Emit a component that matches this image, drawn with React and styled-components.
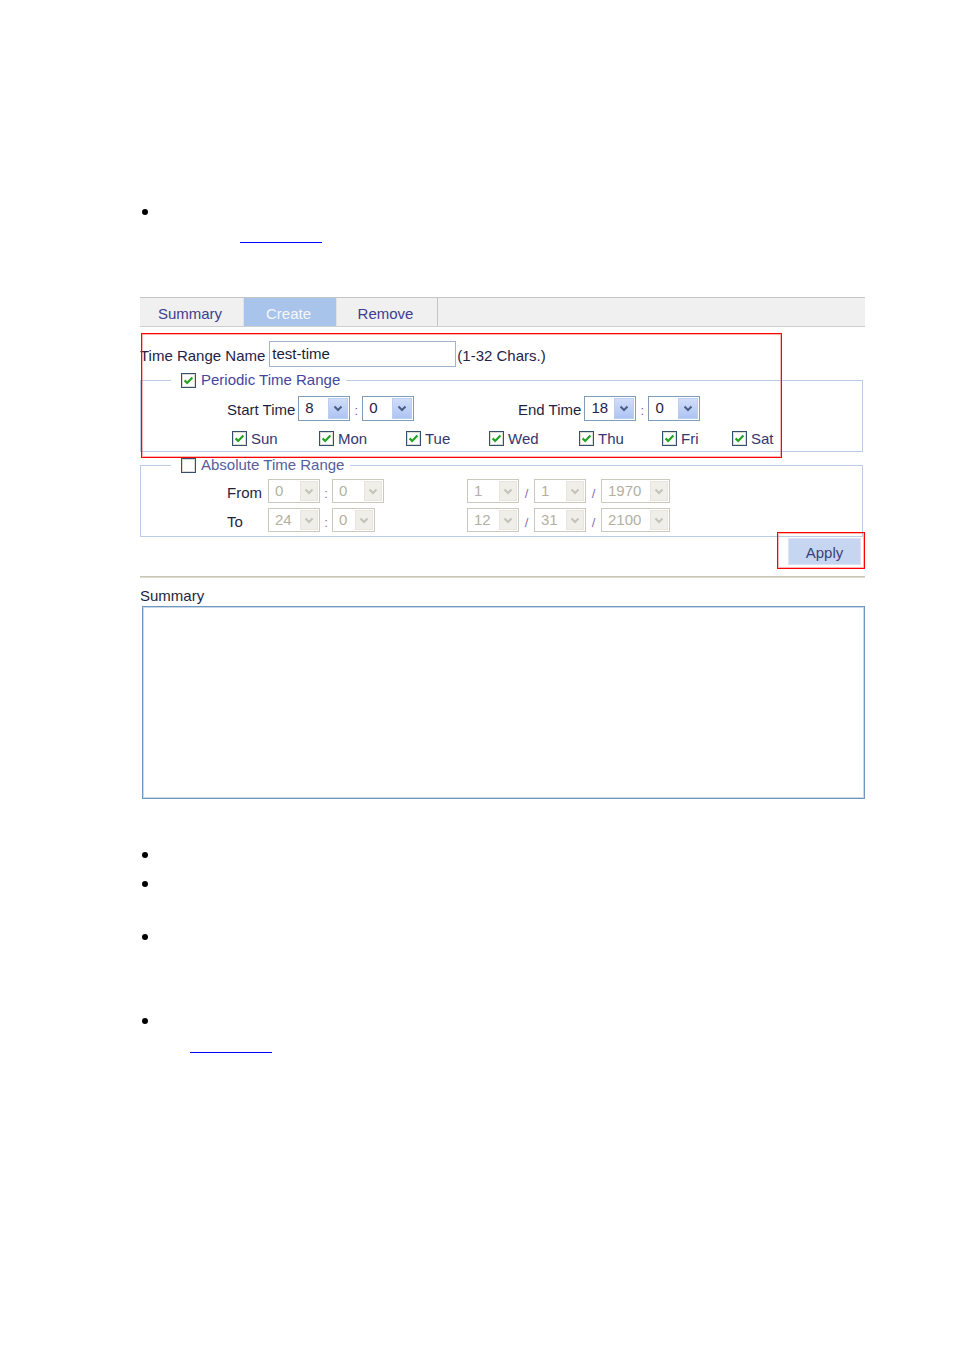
import React from 'react';
import styled, { createGlobalStyle } from 'styled-components';

const GlobalStyle = createGlobalStyle`
    html, body {
        margin: 0;
        padding: 0;
        background: #ffffff;
    }
    body {
        font-family: "Liberation Sans", Arial, sans-serif;
        font-size: 15px;
        color: #222244;
    }
`;

const DAYS = ['Sun', 'Mon', 'Tue', 'Wed', 'Thu', 'Fri', 'Sat'];

function CheckBox({ checked }) {
    return (
        <BoxSvg width="15" height="15" viewBox="0 0 15 15">
            <rect x="0.5" y="0.5" width="14" height="14" fill="#ffffff" stroke="#33506f" />
            <rect x="1.5" y="1.5" width="12" height="12" fill="none" stroke="#dcdbd4" />
            {checked && (
                <path d="M3.6 7.4 L6.2 10 L11.4 4.6" fill="none" stroke="#22a322" strokeWidth="2.2" />
            )}
        </BoxSvg>
    );
}

function Chevron({ disabled }) {
    return (
        <svg width="10" height="7" viewBox="0 0 10 7">
            <path
                d="M1.5 1.5 L5 5 L8.5 1.5"
                fill="none"
                stroke={disabled ? '#c4c3ba' : '#4a5e84'}
                strokeWidth="2"
            />
        </svg>
    );
}

function Select({ value, width = 52, height = 25, disabled }) {
    return (
        <SelectBox $w={width} $h={height} $disabled={disabled}>
            <SelectValue>{value}</SelectValue>
            <SelectButton $disabled={disabled}>
                <Chevron disabled={disabled} />
            </SelectButton>
        </SelectBox>
    );
}

export default function App() {
    return (
        <Page>
            <GlobalStyle />
            <Bullet $top={0} />
            <LinkLine $top={27} $left={100} />

            <TabBar>
                <Tab $w={103}>Summary</Tab>
                <Tab $w={92} $active>Create</Tab>
                <Tab $w={100} $last>Remove</Tab>
            </TabBar>

            <FormArea>
                <NameRow>
                    <NameLabel>Time Range Name</NameLabel>
                    <TextInput type="text" value="test-time" readOnly />
                    <Hint>(1-32 Chars.)</Hint>
                </NameRow>

                <Group $top={4} $bottom={5}>
                    <GroupLegend>
                        <LegendInner $color="#4545a0">
                            <CheckBox checked />
                            Periodic Time Range
                        </LegendInner>
                    </GroupLegend>
                    <TimeRow $first={291} $top={7}>
                        <FieldGroup>
                            <FieldLabel>Start Time</FieldLabel>
                            <Select value="8" />
                            <Sep>:</Sep>
                            <Select value="0" />
                        </FieldGroup>
                        <FieldGroup>
                            <FieldLabel>End Time</FieldLabel>
                            <Select value="18" />
                            <Sep>:</Sep>
                            <Select value="0" />
                        </FieldGroup>
                    </TimeRow>
                    <DayRow>
                        {DAYS.map(day => (
                            <Day key={day}>
                                <CheckBox checked />
                                <DayLabel>{day}</DayLabel>
                            </Day>
                        ))}
                    </DayRow>
                </Group>

                <Group $top={4} $bottom={4}>
                    <GroupLegend>
                        <LegendInner $color="#55609c">
                            <CheckBox />
                            Absolute Time Range
                        </LegendInner>
                    </GroupLegend>
                    <TimeRow $first={240} $top={5}>
                        <FieldGroup>
                            <FieldLabel $w={41}>From</FieldLabel>
                            <Select value="0" height={24} disabled />
                            <Sep $muted>:</Sep>
                            <Select value="0" height={24} disabled />
                        </FieldGroup>
                        <FieldGroup>
                            <Select value="1" height={24} disabled />
                            <Sep $w={15} $muted>/</Sep>
                            <Select value="1" height={24} disabled />
                            <Sep $w={15} $muted>/</Sep>
                            <Select value="1970" width={69} height={24} disabled />
                        </FieldGroup>
                    </TimeRow>
                    <TimeRow $first={240} $top={5}>
                        <FieldGroup>
                            <FieldLabel $w={41}>To</FieldLabel>
                            <Select value="24" height={24} disabled />
                            <Sep $muted>:</Sep>
                            <Select value="0" width={43} height={24} disabled />
                        </FieldGroup>
                        <FieldGroup>
                            <Select value="12" height={24} disabled />
                            <Sep $w={15} $muted>/</Sep>
                            <Select value="31" height={24} disabled />
                            <Sep $w={15} $muted>/</Sep>
                            <Select value="2100" width={69} height={24} disabled />
                        </FieldGroup>
                    </TimeRow>
                </Group>

                <ApplyRow>
                    <ApplyButton type="button">Apply</ApplyButton>
                </ApplyRow>

                <Callout $x={1} $y={6} $w={641} $h={125} />
                <Callout $x={637} $y={205} $w={88} $h={37} />
            </FormArea>

            <Separator />
            <SummaryLabel>Summary</SummaryLabel>
            <SummaryBox />

            <Bullet $top={53} />
            <Bullet $top={23} />
            <Bullet $top={47} />
            <Bullet $top={78} />
            <LinkLine $top={28} $left={50} />
        </Page>
    );
}

const Page = styled.div`
    width: 954px;
    min-height: 1350px;
    box-sizing: border-box;
    padding: 209px 89px 0 140px;
`;

const Bullet = styled.span`
    display: block;
    width: 6px;
    height: 6px;
    margin: ${({ $top }) => $top}px 0 0 2px;
    border-radius: 50%;
    background: #000000;
`;

const LinkLine = styled.span`
    display: block;
    width: 82px;
    height: 0;
    margin: ${({ $top }) => $top}px 0 0 ${({ $left }) => $left}px;
    border-top: 1px solid #0000ff;
`;

const TabBar = styled.div`
    display: flex;
    height: 28px;
    margin-top: 54px;
    border-top: 1px solid #c6c6c6;
    border-bottom: 1px solid #cecece;
    background: #f0f0f0;
`;

const Tab = styled.div`
    width: ${({ $w }) => $w + 1}px;
    display: flex;
    align-items: center;
    justify-content: center;
    padding: 3px 3px 0 0;
    box-sizing: border-box;
    border-right: 1px solid ${({ $last }) => ($last ? '#c4c4c4' : '#e2e2e2')};
    background: ${({ $active }) => ($active ? '#a9c4eb' : 'transparent')};
    color: ${({ $active }) => ($active ? '#f5f7fc' : '#3e3e8e')};
    flex-shrink: 0;
`;

const FormArea = styled.div`
    position: relative;
    padding-top: 14px;
`;

const NameRow = styled.div`
    display: flex;
    align-items: center;
`;

const NameLabel = styled.span`
    padding-top: 3px;
    margin-right: 4px;
    white-space: nowrap;
    color: #23234a;
`;

const TextInput = styled.input`
    width: 187px;
    height: 26px;
    box-sizing: border-box;
    margin: 0;
    padding: 0 2px 2px;
    border: 1px solid #9fb4cd;
    font-family: "Liberation Sans", Arial, sans-serif;
    font-size: 15px;
    color: #1c1c3c;
    background: #ffffff;
    outline: none;
`;

const Hint = styled.span`
    padding-top: 3px;
    margin-left: 1px;
    color: #23234a;
`;

const Group = styled.fieldset`
    margin: ${({ $top }) => $top}px 2px 0 0;
    padding: 0 0 ${({ $bottom }) => $bottom}px 0;
    border: 1px solid #b9cde6;
    min-inline-size: 0;
`;

const GroupLegend = styled.legend`
    margin-left: 30px;
    padding: 0 6px 0 10px;
    height: 18px;
    line-height: 18px;
`;

const LegendInner = styled.span`
    display: inline-flex;
    align-items: center;
    gap: 5px;
    height: 18px;
    color: ${({ $color }) => $color};
`;

const BoxSvg = styled.svg`
    display: block;
    flex-shrink: 0;
`;

const TimeRow = styled.div`
    display: grid;
    grid-template-columns: ${({ $first }) => $first}px auto;
    padding-left: 86px;
    margin-top: ${({ $top = 8 }) => $top}px;
`;

const FieldGroup = styled.div`
    display: flex;
    align-items: center;
`;

const FieldLabel = styled.span`
    ${({ $w }) => ($w ? `width: ${$w}px;` : 'margin-right: 3px;')}
    padding-top: 2px;
    white-space: nowrap;
    color: #1f1f3f;
`;

const Sep = styled.span`
    width: ${({ $w = 12 }) => $w}px;
    text-align: center;
    padding-top: 4px;
    font-size: 13px;
    color: ${({ $muted }) => ($muted ? '#8a6cb8' : '#7b55b5')};
    flex-shrink: 0;
`;

const SelectBox = styled.div`
    width: ${({ $w }) => $w}px;
    height: ${({ $h }) => $h}px;
    box-sizing: border-box;
    display: flex;
    align-items: stretch;
    justify-content: space-between;
    padding: 1px;
    border: 1px solid ${({ $disabled }) => ($disabled ? '#cbc9bc' : '#7f9db9')};
    background: #ffffff;
    color: ${({ $disabled }) => ($disabled ? '#b3b0a2' : '#22224a')};
    flex-shrink: 0;
`;

const SelectValue = styled.span`
    display: flex;
    align-items: center;
    padding: 0 0 2px 5px;
`;

const SelectButton = styled.span`
    width: ${({ $disabled }) => ($disabled ? 18 : 20)}px;
    display: flex;
    align-items: center;
    justify-content: center;
    box-sizing: border-box;
    border: 1px solid ${({ $disabled }) => ($disabled ? '#e6e5de' : '#bccdf0')};
    background: ${({ $disabled }) =>
        $disabled ? '#efeee8' : 'linear-gradient(#d0ddfa, #aec4f2)'};
`;

const DayRow = styled.div`
    display: grid;
    grid-template-columns: 87px 87px 83px 90px 83px 70px auto;
    align-items: center;
    height: 16px;
    margin-top: 9px;
    padding-left: 91px;
`;

const Day = styled.label`
    display: flex;
    align-items: center;
    gap: 4px;
`;

const DayLabel = styled.span`
    color: #36366f;
`;

const ApplyRow = styled.div`
    display: flex;
    justify-content: flex-end;
    margin-top: 1px;
    padding-right: 4px;
`;

const ApplyButton = styled.button`
    width: 73px;
    height: 27px;
    margin: 0;
    padding: 2px 0 0;
    border: 1px solid #dbe4f4;
    background: #c6d6f0;
    color: #3e3e7c;
    font-family: "Liberation Sans", Arial, sans-serif;
    font-size: 15px;
`;

const Callout = styled.div`
    position: absolute;
    z-index: 2;
    left: ${({ $x }) => $x}px;
    top: ${({ $y }) => $y}px;
    width: ${({ $w }) => $w}px;
    height: ${({ $h }) => $h}px;
    box-sizing: border-box;
    border: 1px solid #ff0000;
    box-shadow: inset 0 0 0 1px rgba(255, 40, 40, 0.35);
    pointer-events: none;
`;

const Separator = styled.div`
    height: 0;
    margin-top: 11px;
    border-top: 1px solid #c9c6b8;
    border-bottom: 1px solid #dedbd0;
`;

const SummaryLabel = styled.div`
    margin-top: 10px;
    line-height: 16px;
    color: #1f1f3f;
`;

const SummaryBox = styled.div`
    width: 723px;
    height: 193px;
    box-sizing: border-box;
    margin: 2px 0 0 2px;
    border: 1px solid #6f97bf;
    box-shadow: inset 0 0 0 1px #c9d8e9;
    background: #ffffff;
`;
